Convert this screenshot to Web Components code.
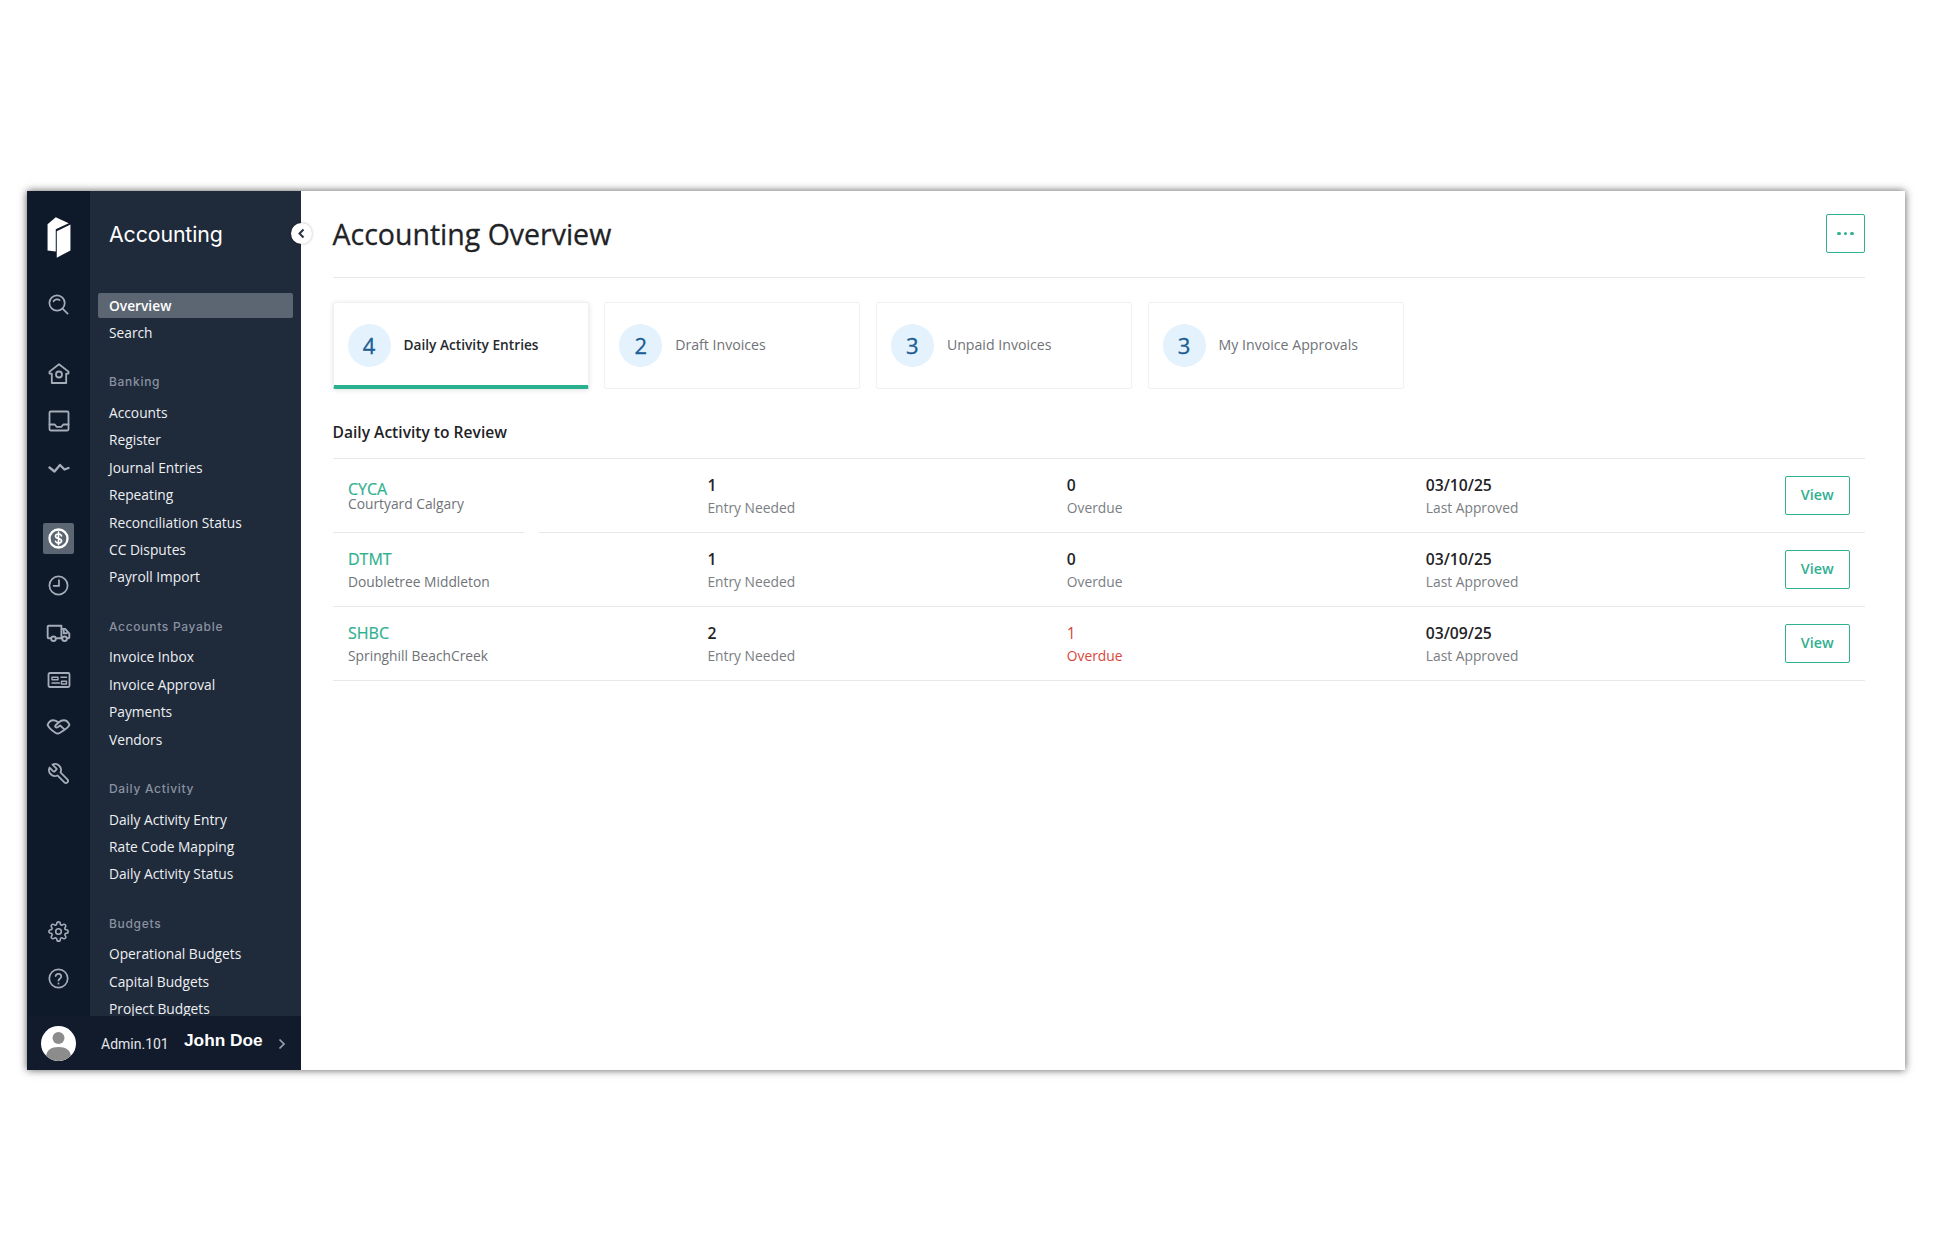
<!DOCTYPE html>
<html lang="en">
<head>
<meta charset="utf-8">
<title>Accounting Overview</title>
<style>
  html, body { margin: 0; background: #fff; }
  body { padding: 191px 0 0 27px; height: 1059px; overflow: hidden; font-family: "Open Sans", sans-serif; }
</style>
</head>
<body>
<app-shell>
  <rail-nav slot="rail"></rail-nav>
  <side-nav slot="side">
    <nav-item active>Overview</nav-item>
    <nav-item>Search</nav-item>
    <nav-group label="Banking">
      <nav-item>Accounts</nav-item>
      <nav-item>Register</nav-item>
      <nav-item>Journal Entries</nav-item>
      <nav-item>Repeating</nav-item>
      <nav-item>Reconciliation Status</nav-item>
      <nav-item>CC Disputes</nav-item>
      <nav-item>Payroll Import</nav-item>
    </nav-group>
    <nav-group label="Accounts Payable">
      <nav-item>Invoice Inbox</nav-item>
      <nav-item>Invoice Approval</nav-item>
      <nav-item>Payments</nav-item>
      <nav-item>Vendors</nav-item>
    </nav-group>
    <nav-group label="Daily Activity">
      <nav-item>Daily Activity Entry</nav-item>
      <nav-item>Rate Code Mapping</nav-item>
      <nav-item>Daily Activity Status</nav-item>
    </nav-group>
    <nav-group label="Budgets">
      <nav-item>Operational Budgets</nav-item>
      <nav-item>Capital Budgets</nav-item>
      <nav-item>Project Budgets</nav-item>
    </nav-group>
  </side-nav>
  <user-bar slot="user"></user-bar>
  <overview-page slot="main">
    <stat-card slot="cards" count="4" active>Daily Activity Entries</stat-card>
    <stat-card slot="cards" count="2">Draft Invoices</stat-card>
    <stat-card slot="cards" count="3">Unpaid Invoices</stat-card>
    <stat-card slot="cards" count="3">My Invoice Approvals</stat-card>
    <review-row slot="rows" code="CYCA" name="Courtyard Calgary" entries="1" overdue="0" approved="03/10/25" tight></review-row>
    <review-row slot="rows" code="DTMT" name="Doubletree Middleton" entries="1" overdue="0" approved="03/10/25"></review-row>
    <review-row slot="rows" code="SHBC" name="Springhill BeachCreek" entries="2" overdue="1" approved="03/09/25"></review-row>
  </overview-page>
</app-shell>

<script>
const ICONS = {
  search: '<circle cx="10.5" cy="10.500" r="8"/><path d="M6.800 8.600a4.600 4.600 0 0 1 6.400-1.200"/><path d="M16.500 16.500l5 5"/>',
  home: '<path d="M12 2.200L21.500 9.600v2h-2.300V21H4.800v-9.400H2.500v-2z"/><circle cx="12" cy="12.500" r="3"/>',
  inbox: '<rect x="2.500" y="2.500" width="19" height="19" rx="1.200"/><path d="M2.500 15.500h5.200l2 2.400h4.600l2-2.400h5.200"/>',
  activity: '<path d="M2.500 11.500l5 4 5.500-6.500 4.500 4.500 4-1.500" stroke-width="2.400"/>',
  dollar: '<circle cx="12" cy="12" r="9.400" stroke-width="2.400"/><path d="M15.200 9.200c-.5-1.200-1.700-1.900-3.200-1.900-1.800 0-3.100 1-3.100 2.400 0 3.300 6.300 1.500 6.300 4.700 0 1.400-1.400 2.400-3.200 2.400-1.500 0-2.700-.7-3.200-1.900M12 5.400v13.200" stroke-width="1.700"/>',
  clock: '<circle cx="12" cy="12" r="9.500"/><path d="M12.500 6.500v6H7"/>',
  truck: '<path d="M5 17.500H2.600a1 1 0 0 1-1-1V6.500a1 1 0 0 1 1-1h12.200v12H9.500M14.800 8.500h3.600l4 4.600v3.400a1 1 0 0 1-1 1h-1M15 17.500h.5"/><circle cx="7.200" cy="18" r="2.200"/><circle cx="17.800" cy="18" r="2.200"/><path d="M17 9.500v3.200h3"/>',
  card: '<rect x="1.500" y="5" width="21" height="14" rx="1.400"/><path d="M5 9.200h6v2.600H5zM14 9.200h5.500M5 15h7.500M14.500 13.200h5v2.800h-5z" stroke-width="1.400"/>',
  handshake: '<path d="M7 6C4.500 6 2.500 8 1.500 10.500 2.500 13 5 15.500 9 18c1.500 1 3 1 4.500 0 3.500-2 7.500-4.500 9-7.500C21.500 8 19.500 6 17 6c-2 0-3.500 1-5 2.200C10.500 6.800 8.800 6 7 6z"/><path d="M12 8.200L9 11c-1 1.500 1 2.500 2.500 1.500l2-1.500 4 3.500"/>',
  wrench: '<g transform="translate(24 0) scale(-1 1)"><path d="M14.700 6.300a1 1 0 0 0 0 1.400l1.600 1.600a1 1 0 0 0 1.400 0l3.770-3.770a6 6 0 0 1-7.940 7.940l-6.910 6.910a2.120 2.120 0 0 1-3-3l6.910-6.910a6 6 0 0 1 7.940-7.940l-3.760 3.760z"/></g>',
  gear: '<circle cx="12" cy="12" r="3.200"/><path d="M19.400 15a1.650 1.650 0 0 0 .33 1.820l.06.06a2 2 0 0 1 0 2.830 2 2 0 0 1-2.830 0l-.06-.06a1.650 1.650 0 0 0-1.820-.33 1.650 1.650 0 0 0-1 1.510V21a2 2 0 0 1-2 2 2 2 0 0 1-2-2v-.09A1.650 1.650 0 0 0 9 19.400a1.650 1.650 0 0 0-1.820.33l-.06.06a2 2 0 0 1-2.830 0 2 2 0 0 1 0-2.830l.06-.06a1.650 1.650 0 0 0 .33-1.820 1.650 1.650 0 0 0-1.510-1H3a2 2 0 0 1-2-2 2 2 0 0 1 2-2h.09A1.650 1.650 0 0 0 4.600 9a1.650 1.650 0 0 0-.33-1.820l-.06-.06a2 2 0 0 1 0-2.830 2 2 0 0 1 2.830 0l.06.06a1.650 1.650 0 0 0 1.820.33H9a1.650 1.650 0 0 0 1-1.510V3a2 2 0 0 1 2-2 2 2 0 0 1 2 2v.09a1.650 1.650 0 0 0 1 1.510 1.650 1.650 0 0 0 1.820-.33l.06-.06a2 2 0 0 1 2.830 0 2 2 0 0 1 0 2.830l-.06.06a1.650 1.650 0 0 0-.33 1.820V9a1.650 1.650 0 0 0 1.510 1H21a2 2 0 0 1 2 2 2 2 0 0 1-2 2h-.09a1.650 1.650 0 0 0-1.510 1z"/>',
  help: '<circle cx="12" cy="12" r="9.600"/><path d="M9 9.400a3 3 0 0 1 5.900.6c0 2-2.900 2.400-2.900 4.200"/><path d="M12 17.200v.2"/>'
};

const define = (name, html) => {
  customElements.define(name, class extends HTMLElement {
    connectedCallback() {
      if (this.shadowRoot) return;
      this.attachShadow({mode: "open"});
      this.shadowRoot.innerHTML = typeof html === "function" ? html(this) : html;
    }
  });
};

define("app-shell", `
  <style>
    :host {
      display: grid;
      grid-template-columns: 274px 1fr;
      grid-template-rows: 1fr 54px;
      width: 1878px;
      height: 879px;
      background: #fff;
      box-shadow: 0 0 8px rgba(0,0,0,.65);
      position: relative;
    }
    .nav { display: flex; min-height: 0; overflow: hidden; }
    .main { grid-column: 2; grid-row: 1 / 3; min-width: 0; }
    .user { grid-column: 1; grid-row: 2; }
    .toggle {
      position: absolute;
      left: 263.5px;
      top: 32px;
      width: 21px;
      height: 21px;
      border-radius: 50%;
      background: #fff;
      box-shadow: 0 0 3px rgba(0,0,0,.3);
      display: flex;
      align-items: center;
      justify-content: center;
    }
  </style>
  <div class="nav"><slot name="rail"></slot><slot name="side"></slot></div>
  <div class="user"><slot name="user"></slot></div>
  <div class="main"><slot name="main"></slot></div>
  <div class="toggle"><svg width="9" height="11" viewBox="0 0 9 11" fill="none" stroke="#2b3340" stroke-width="2"><path d="M6.500 1.500L2.500 5.500l4 4"/></svg></div>
`);

define("nav-icon", el => `
  <style>
    :host { display: flex; align-items: center; justify-content: center; width: 63px; height: 47px; color: #a5adb8; }
    .box { width: 31px; height: 31px; border-radius: 2px; display: flex; align-items: center; justify-content: center; }
    :host([active]) { color: #fff; }
    :host([active]) .box { background: #5c6672; }
    svg { width: ${el.getAttribute("size") || 23}px; height: ${el.getAttribute("size") || 23}px; display: block; fill: none; stroke: currentColor; stroke-width: 1.8; stroke-linecap: round; stroke-linejoin: round; }
  </style>
  <div class="box"><svg viewBox="0 0 24 24">${ICONS[el.getAttribute("name")]}</svg></div>
`);

define("rail-nav", `
  <style>
    :host { display: flex; flex-direction: column; width: 63px; height: 100%; background: #0e1929; flex: none; }
    .logo { height: 90px; display: flex; justify-content: center; padding-top: 26px; box-sizing: border-box; }
    .group { margin-top: 22.5px; }
    .tools { margin-top: 23.5px; }
    .bottom { margin-top: auto; padding-bottom: 14px; }
  </style>
  <div class="logo">
    <svg width="26" height="41" viewBox="31 24 71 120" fill="#fff">
      <polygon points="33,45 57,25 95,42 57,60 57,125 33,122"/>
      <polygon points="60,66 100,46 100,122 60,143"/>
    </svg>
  </div>
  <nav-icon name="search"></nav-icon>
  <div class="group">
    <nav-icon name="home" size="24"></nav-icon>
    <nav-icon name="inbox" size="24"></nav-icon>
    <nav-icon name="activity" size="24"></nav-icon>
  </div>
  <div class="tools">
    <nav-icon name="dollar" active></nav-icon>
    <nav-icon name="clock"></nav-icon>
    <nav-icon name="truck" size="25"></nav-icon>
    <nav-icon name="card" size="24"></nav-icon>
    <nav-icon name="handshake" size="25"></nav-icon>
    <nav-icon name="wrench" size="24"></nav-icon>
  </div>
  <div class="bottom">
    <nav-icon name="gear" size="21"></nav-icon>
    <nav-icon name="help"></nav-icon>
  </div>
`);

define("side-nav", `
  <style>
    :host { display: block; width: 211px; height: 100%; background: #1f2a3b; flex: none; overflow: hidden; }
    h1 { margin: 0; height: 100px; padding: 27px 0 0 19px; box-sizing: border-box; font: 400 21.300px/32px Inter, sans-serif; color: #fff; letter-spacing: -.1px; }
    .list { padding: 0 8px 0 7.5px; }
  </style>
  <h1>Accounting</h1>
  <div class="list"><slot></slot></div>
`);

define("nav-group", el => `
  <style>
    :host { display: block; margin-top: 26.2px; }
    .label { font: 500 12px/19px Inter, sans-serif; letter-spacing: .7px; color: #8a92a0; padding-left: 11.5px; margin-bottom: 7.3px; }
  </style>
  <div class="label">${el.getAttribute("label")}</div>
  <slot></slot>
`);

define("nav-item", `
  <style>
    :host { display: block; height: 27.45px; font: 400 13.75px/27.45px "Open Sans", sans-serif; color: #eef0f2; padding-left: 11.5px; box-sizing: border-box; white-space: nowrap; }
    :host([active]) { background: #5c6672; border-radius: 2px; height: 25.5px; line-height: 25px; margin-bottom: .85px; margin-top: 1.5px; font-weight: 600; color: #fff; }
  </style>
  <slot></slot>
`);

define("user-bar", `
  <style>
    :host { display: flex; align-items: center; height: 54px; background: #111b2c; color: #fff; position: relative; }
    .avatar { width: 35px; height: 35px; margin-left: 14px; border-radius: 50%; background: #fff; overflow: hidden; flex: none; }
    svg { display: block; }
    .role { margin-left: 25px; font: 400 14px/20px Roboto, sans-serif; color: #e4e6e9; width: 83px; padding-top: 1px; }
    .name { font: 700 17.3px/20px "Liberation Sans", sans-serif; width: 94px; padding-bottom: 6px; }
    .chev { padding-top: 1px; }
  </style>
  <div class="avatar"><svg width="35" height="35" viewBox="0 0 35 35" fill="#8c8c8c"><circle cx="17.500" cy="12" r="6"/><path d="M5 30c1-6 5-9 12.500-9s11.500 3 12.500 9c-3 3-8 5-12.500 5S8 33 5 30z"/></svg></div>
  <div class="role">Admin.101</div>
  <div class="name">John Doe</div>
  <svg class="chev" width="8" height="14" viewBox="0 0 8 12" fill="none" stroke="#9aa1ab" stroke-width="1.700"><path d="M1.500 1.500L6 6l-4.500 4.500"/></svg>
`);

define("overview-page", `
  <style>
    :host { display: block; padding: 0 40px 0 31.500px; height: 100%; box-sizing: border-box; color: #1f2326; }
    header { height: 87px; display: flex; align-items: center; justify-content: space-between; border-bottom: 1px solid #e6e8ea; box-sizing: border-box; }
    h1 { margin: 0; font: 400 28.500px/40px "Open Sans", sans-serif; -webkit-text-stroke: .3px currentColor; }
    .more { width: 39px; height: 39px; box-sizing: border-box; border: 1px solid #2fb08f; border-radius: 2px; display: flex; align-items: center; justify-content: center; gap: 3px; margin-bottom: 1px; }
    .more i { width: 3.500px; height: 3.500px; background: #2fb08f; border-radius: 50%; display: block; }
    .cards { display: flex; gap: 15.700px; margin-top: 24px; }
    h2 { margin: 32px 0 0; font: 600 15.600px/22px "Open Sans", sans-serif; height: 37px; }
    .rows { border-top: 1px solid #e6e8ea; }
  </style>
  <header>
    <h1>Accounting Overview</h1>
    <div class="more"><i></i><i></i><i></i></div>
  </header>
  <div class="cards"><slot name="cards"></slot></div>
  <h2>Daily Activity to Review</h2>
  <div class="rows"><slot name="rows"></slot></div>
`);

define("stat-card", el => `
  <style>
    :host { display: flex; align-items: center; width: 256px; height: 87px; box-sizing: border-box; padding-left: 14px; border: 1px solid #f0f1f3; border-radius: 2px; font: 400 14.150px/20px "Open Sans", sans-serif; color: #6f7377; background: #fff; }
    :host([active]) { color: #25292d; border-bottom: 4px solid #2bb08f; box-shadow: 0 1px 5px rgba(0,0,0,.12); padding-top: 3px; font-size: 13.700px; font-weight: 600; }
    .count { width: 43px; height: 43px; margin-right: 13px; border-radius: 50%; background: #e3f2fd; color: #1c5d93; font: 400 22px/43px "Open Sans", sans-serif; -webkit-text-stroke: .3px currentColor; text-align: center; flex: none; }
    .label { padding-bottom: 2px; }
  </style>
  <div class="count">${el.getAttribute("count")}</div>
  <div class="label"><slot></slot></div>
`);

define("review-row", el => {
  const late = el.getAttribute("overdue") !== "0";
  const stat = (value, label, warn) => `
    <div class="stat${warn ? " warn" : ""}"><b>${value}</b><span>${label}</span></div>`;
  return `
  <style>
    :host { display: grid; grid-template-columns: 359.400px 359.400px 359px 1fr; align-items: center; height: 74px; box-sizing: border-box; padding: 0 15.500px; border-bottom: 1px solid #e6e8ea; position: relative; }
    .id a { display: block; font: 400 16px/24px "Open Sans", sans-serif; color: #2fb08f; -webkit-text-stroke: .2px currentColor; }
    .id span { display: block; font: 400 13.800px/22px "Open Sans", sans-serif; color: #6f7377; }
    :host([tight]) .id { align-self: start; padding-top: 18.300px; }
    :host([tight]) .id span { line-height: 15px; margin-top: -5.500px; }
    .stat b { display: block; font: 600 15.700px/24px "Open Sans", sans-serif; color: #1f2326; }
    .stat span { display: block; font: 400 13.800px/22px "Open Sans", sans-serif; color: #7a7e82; }
    .stat.warn b { color: #d9453b; font-weight: 400; }
    .stat.warn span { color: #d9453b; }
    .line { display: flex; align-items: center; justify-content: space-between; }
    button { width: 64.500px; height: 39px; box-sizing: border-box; background: #fff; border: 1px solid #2fb08f; border-radius: 2px; color: #2fb08f; font: 600 14.300px/20px "Open Sans", sans-serif; padding: 0 0 2px; margin-left: auto; display: block; }
    .notch { display: none; position: absolute; left: 191px; bottom: -1px; width: 15px; height: 1px; background: #fff; }
    :host([tight]) .notch { display: block; }
  </style>
  <div class="id"><a>${el.getAttribute("code")}</a><span>${el.getAttribute("name")}</span></div>
  ${stat(el.getAttribute("entries"), "Entry Needed")}
  ${stat(el.getAttribute("overdue"), "Overdue", late)}
  <div class="line">${stat(el.getAttribute("approved"), "Last Approved")}<button>View</button></div>
  <div class="notch"></div>`;
});
</script>
</body>
</html>
